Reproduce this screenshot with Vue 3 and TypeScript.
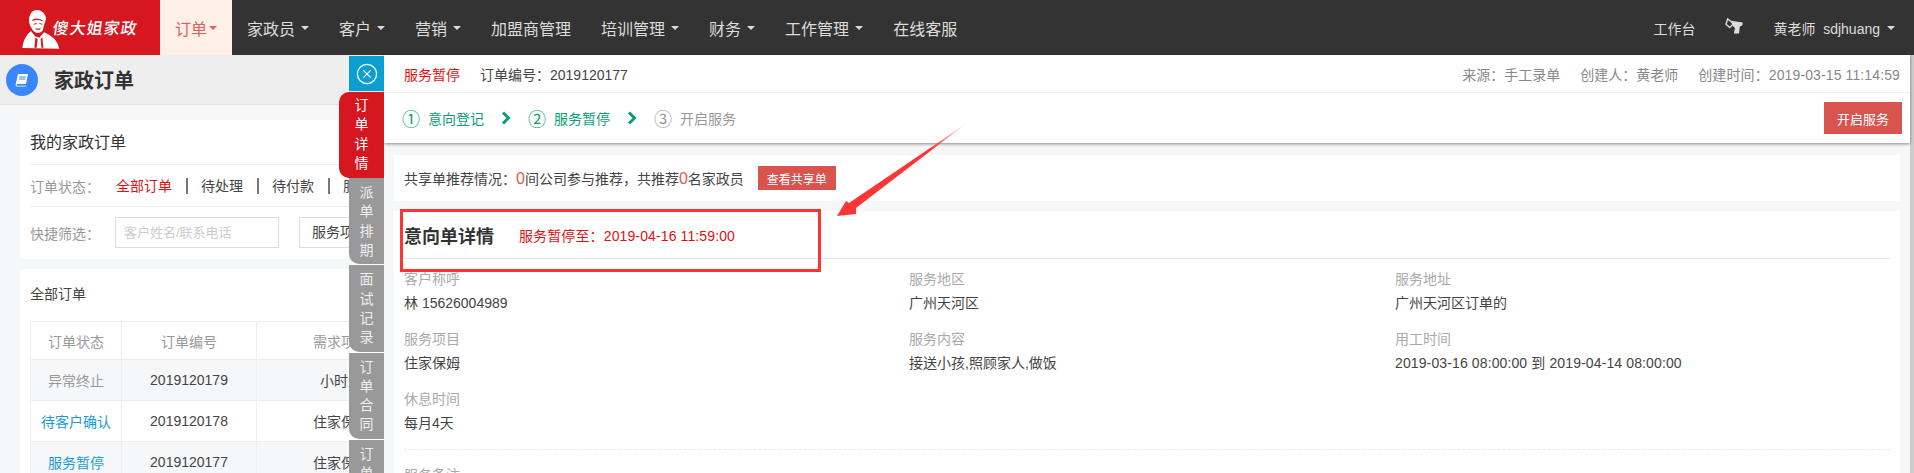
<script setup lang="ts">
interface NavItem {
  label: string;
  caret: boolean;
  active?: boolean;
}

interface OrderRow {
  status: string;
  code: string;
  need: string;
  muted?: boolean;
}

const navItems: NavItem[] = [
  { label: '订单', caret: true, active: true },
  { label: '家政员', caret: true },
  { label: '客户', caret: true },
  { label: '营销', caret: true },
  { label: '加盟商管理', caret: false },
  { label: '培训管理', caret: true },
  { label: '财务', caret: true },
  { label: '工作管理', caret: true },
  { label: '在线客服', caret: false },
];

const statusTabs = ['全部订单', '待处理', '待付款', '服务中'];

const orders: OrderRow[] = [
  { status: '异常终止', code: '2019120179', need: '小时工', muted: true },
  { status: '待客户确认', code: '2019120178', need: '住家保姆' },
  { status: '服务暂停', code: '2019120177', need: '住家保姆' },
];

const sideTabs = ['派单排期', '面试记录', '订单合同', '订单日志'];

const details = [
  { label: '客户称呼', value: '林 15626004989' },
  { label: '服务地区', value: '广州天河区' },
  { label: '服务地址', value: '广州天河区订单的' },
  { label: '服务项目', value: '住家保姆' },
  { label: '服务内容', value: '接送小孩,照顾家人,做饭' },
  { label: '用工时间', value: '2019-03-16 08:00:00 到 2019-04-14 08:00:00', date: true },
  { label: '休息时间', value: '每月4天' },
];
</script>

<template>
  <div class="page">
    <header class="nav">
      <div class="logo">
        <svg class="logo__figure" viewBox="66 14 114 120" width="38" height="40" aria-hidden="true">
          <path fill="#fff" d="M88 38Q94 14 115 17Q136 22 138 44L131 66Q130 84 116 86Q100 86 95 72Q84 56 88 38Z" />
          <path fill="#d7171f" d="M97 46Q112 38 128 48L127 51Q112 44 98 50ZM101 58L110 56V59L101 61ZM118 56L127 58V61L118 59ZM106 71Q114 75 122 70L121 75Q113 78 107 75Z" />
          <path fill="#fff" d="M93 80Q70 98 67 131L178 133Q172 100 132 84L118 100L105 96Z" />
          <path fill="#d7171f" d="M106 100L113 104L110 130H103ZM122 104L127 99L130 130H124Z" />
        </svg>
        <span class="logo__text">傻大姐家政</span>
      </div>
      <a
        v-for="item in navItems"
        :key="item.label"
        class="nav__item"
        :class="{ 'nav__item--active': item.active }"
      >
        {{ item.label }}<i v-if="item.caret" class="caret" />
      </a>
      <div class="nav__right">
        <a class="nav__link">工作台</a>
        <a class="nav__link">
          <svg viewBox="0 0 18 16" width="18" height="16" aria-hidden="true">
            <path fill="none" stroke="#ddd" stroke-width="1.4" d="M2.6 1L1 6.2L4.8 9.6L8.6 5.4Z" />
            <path fill="#ddd" d="M6 2.8L17.8 4.4L17.2 7.6L14.8 8.6L14 15.6H8.8L10 10.2L7.4 7.6Z" />
          </svg>
        </a>
        <a class="nav__link">黄老师&nbsp;&nbsp;sdjhuang<i class="caret caret--user" /></a>
      </div>
    </header>

    <div class="list-page">
      <div class="list-page__head">
        <span class="round-icon">
          <svg viewBox="0 0 16 16" width="16" height="16" aria-hidden="true">
            <path fill="#fff" d="M4 2H14L12 12H3.4Q2.6 12 2.5 13Q2.5 13.8 3.4 13.8H12.4L12.2 14.6H3Q1.4 14.6 1.6 12.6ZM5.4 4.4L5.2 5.4H11.6L11.8 4.4ZM5 6.6L4.8 7.6H11.2L11.4 6.6Z" />
          </svg>
        </span>
        <h1 class="list-page__title">家政订单</h1>
      </div>
      <div class="list-page__body">
        <section class="card filter-card">
          <h2 class="filter-card__title">我的家政订单</h2>
          <div class="filter-row filter-row--status">
            <span class="filter-row__label">订单状态：</span>
            <span
              v-for="(tab, i) in statusTabs"
              :key="tab"
              class="status-tab"
              :class="{ 'status-tab--on': i === 0 }"
            >{{ tab }}</span>
          </div>
          <div class="filter-row filter-row--quick">
            <span class="filter-row__label">快捷筛选：</span>
            <span class="fake-input">客户姓名/联系电话</span>
            <span class="fake-select">服务项目</span>
          </div>
        </section>
        <section class="card table-card">
          <h3 class="table-card__title">全部订单</h3>
          <table class="orders">
            <thead>
              <tr>
                <th class="orders__status">订单状态</th>
                <th class="orders__code">订单编号</th>
                <th class="orders__need">需求项目</th>
              </tr>
            </thead>
            <tbody>
              <tr v-for="row in orders" :key="row.code">
                <td :class="row.muted ? 'is-muted' : 'is-link'">{{ row.status }}</td>
                <td>{{ row.code }}</td>
                <td>{{ row.need }}</td>
              </tr>
            </tbody>
          </table>
        </section>
      </div>
    </div>

    <div class="tabs">
      <div class="tabs__close">
        <svg viewBox="0 0 22 22" width="22" height="22" aria-hidden="true">
          <circle cx="11" cy="11" r="9.6" fill="none" stroke="#fff" stroke-width="1.3" />
          <path fill="none" stroke="#fff" stroke-width="1.3" d="M7.4 7.4L14.6 14.6M14.6 7.4L7.4 14.6" />
        </svg>
      </div>
      <div class="tabs__item tabs__item--on">订单详情</div>
      <div v-for="tab in sideTabs" :key="tab" class="tabs__item">{{ tab }}</div>
    </div>

    <aside class="drawer">
      <div class="drawer__top">
        <div class="drawer__meta">
          <span class="drawer__state">服务暂停</span>
          <span>订单编号：2019120177</span>
          <div class="drawer__info">
            <span>来源：手工录单</span>
            <span>创建人：黄老师</span>
            <span class="is-date">创建时间：2019-03-15 11:14:59</span>
          </div>
        </div>
        <div class="steps">
          <span class="step step--done"><b>①</b>意向登记</span>
          <svg class="steps__arrow" viewBox="0 0 10 14" width="10" height="14" aria-hidden="true">
            <path fill="none" stroke="#0a9d74" stroke-width="3" d="M2 1.5L7.5 7L2 12.5" />
          </svg>
          <span class="step step--done"><b>②</b>服务暂停</span>
          <svg class="steps__arrow" viewBox="0 0 10 14" width="10" height="14" aria-hidden="true">
            <path fill="none" stroke="#0a9d74" stroke-width="3" d="M2 1.5L7.5 7L2 12.5" />
          </svg>
          <span class="step"><b>③</b>开启服务</span>
          <button class="steps__btn" type="button">开启服务</button>
        </div>
      </div>

      <div class="drawer__body">
        <div class="share">
          <span>共享单推荐情况：<em>0</em>间公司参与推荐，共推荐<em>0</em>名家政员</span>
          <button class="share__btn" type="button">查看共享单</button>
        </div>
        <div class="detail">
          <div class="detail__head">
            <h2 class="detail__title">意向单详情</h2>
            <span class="detail__until is-date">服务暂停至：2019-04-16 11:59:00</span>
          </div>
          <div class="detail__grid">
            <div v-for="item in details" :key="item.label" class="field">
              <div class="field__label">{{ item.label }}</div>
              <div class="field__value" :class="{ 'is-date': item.date }">{{ item.value }}</div>
            </div>
          </div>
          <div class="detail__note">
            <div class="field__label">服务备注</div>
          </div>
        </div>
      </div>
    </aside>

    <!-- annotation drawn over the screenshot -->
    <div class="mark" />
    <svg class="mark-arrow" viewBox="820 115 160 110" width="160" height="110" aria-hidden="true">
      <defs>
        <linearGradient id="arrow-fade" x1="967" y1="123" x2="930" y2="150" gradientUnits="userSpaceOnUse">
          <stop offset="0" stop-color="#ff3b3b" stop-opacity="0.1" />
          <stop offset="1" stop-color="#ff3535" />
        </linearGradient>
      </defs>
      <path fill="url(#arrow-fade)" d="M967 123L856 208L856 214L837 216L846 201L849 203Z" />
    </svg>
  </div>
</template>

<style scoped>
.page {
  position: relative;
  width: 1914px;
  height: 473px;
  overflow: hidden;
  background: #f6f7f9;
  color: #444;
  font-family: "Liberation Sans", "Noto Sans CJK SC", sans-serif;
  font-size: 14px;
}

.is-date {
  letter-spacing: 0.12px;
}

.nav {
  display: flex;
  height: 55px;
  background: #333;
  color: #ddd;
}

.logo {
  display: flex;
  align-items: center;
  flex: none;
  width: 160px;
  padding-left: 22px;
  box-sizing: border-box;
  background: #d7171f;
}

.logo__figure {
  flex: none;
  margin-top: 2px;
}

.logo__text {
  margin: -2px 0 0 -7px;
  color: #fff;
  font-size: 16px;
  font-weight: 500;
  letter-spacing: 1px;
  white-space: nowrap;
  transform: skewX(-8deg);
}

.nav__item {
  display: flex;
  align-items: center;
  padding: 0 15px;
  font-size: 16px;
  white-space: nowrap;
}

.nav__item--active {
  background: #fef0e6;
  color: #e0605a;
}

.caret {
  width: 0;
  height: 0;
  margin-left: 6px;
  border-top: 4px solid currentColor;
  border-right: 4px solid transparent;
  border-left: 4px solid transparent;
}

.nav__item--active .caret {
  margin-left: 2px;
}

.nav__right {
  display: flex;
  align-items: center;
  margin-left: auto;
  padding-right: 4px;
}

.nav__link {
  display: flex;
  align-items: center;
  padding: 0 15px;
  white-space: nowrap;
}

.nav__link svg {
  margin-top: -4px;
}

.caret--user {
  margin-left: 7px;
}

.list-page__head {
  display: flex;
  align-items: center;
  height: 50px;
  padding-left: 6px;
  box-sizing: border-box;
  border-bottom: 1px solid #e4e4e4;
  background: #eee;
}

.round-icon {
  display: flex;
  align-items: center;
  justify-content: center;
  width: 32px;
  height: 32px;
  border-radius: 50%;
  background: #3a86ff;
}

.list-page__title {
  margin: 0 0 0 16px;
  color: #333;
  font-size: 20px;
  font-weight: 700;
}

.list-page__body {
  padding: 15px 14px 0 20px;
}

.card {
  background: #fff;
}

.filter-card {
  height: 139px;
  padding: 0 10px;
  box-sizing: border-box;
}

.filter-card__title {
  height: 44px;
  margin: 0;
  border-bottom: 1px solid #eee;
  color: #333;
  font-size: 16px;
  font-weight: 400;
  line-height: 46px;
}

.filter-row {
  display: flex;
  align-items: center;
  height: 41px;
  border-bottom: 1px solid #eee;
}

.filter-row--quick {
  height: 31px;
  margin-top: 10px;
  border-bottom: 0;
}

.filter-row__label {
  flex: none;
  width: 86px;
  color: #999;
}

.status-tab {
  padding-right: 14px;
  margin-right: 13px;
  border-right: 2px solid #777;
  line-height: 16px;
}

.status-tab--on {
  color: #e01010;
}

.fake-input,
.fake-select {
  flex: none;
  height: 31px;
  box-sizing: border-box;
  border: 1px solid #ddd;
  line-height: 29px;
  white-space: nowrap;
}

.fake-input {
  width: 164px;
  margin-left: -1px;
  padding-left: 8px;
  color: #ccc;
  font-size: 13px;
}

.fake-select {
  width: 140px;
  margin-left: 20px;
  padding-left: 12px;
}

.table-card {
  height: 220px;
  margin-top: 10px;
  padding: 0 10px;
}

.table-card__title {
  height: 52px;
  margin: 0;
  font-size: 14px;
  font-weight: 400;
  line-height: 50px;
}

.orders {
  width: 392px;
  border-collapse: collapse;
  table-layout: fixed;
  text-align: center;
}

.orders th,
.orders td {
  border: 1px solid #eee;
  padding: 0;
  white-space: nowrap;
}

.orders th {
  height: 37px;
  color: #999;
  font-weight: 400;
}

.orders td {
  height: 40px;
}

.orders tbody tr:nth-child(odd) {
  background: #f6f7f9;
}

.orders__status {
  width: 90px;
}

.orders__code {
  width: 134px;
}

.orders__need {
  width: 168px;
}

.is-muted {
  color: #999;
}

.is-link {
  color: #1a9ad6;
}

.tabs {
  position: absolute;
  top: 56px;
  left: 339px;
  display: flex;
  flex-direction: column;
  align-items: flex-end;
  width: 45px;
  z-index: 2;
}

.tabs__close {
  display: flex;
  align-items: center;
  justify-content: center;
  width: 35px;
  height: 35px;
  margin-bottom: 1px;
  background: #0a9fd0;
}

.tabs__item {
  width: 35px;
  margin-bottom: 1px;
  padding: 5px 10px 4px;
  box-sizing: border-box;
  border-radius: 0 0 0 10px;
  background: #999;
  color: #eee;
  font-size: 14px;
  line-height: 19.3px;
  text-align: center;
  word-break: break-all;
}

.tabs__item--on {
  width: 45px;
  margin-bottom: 0;
  padding: 4px 15px 5px;
  border-radius: 10px 0 0 10px;
  background: #d7171f;
  color: #fff;
}

.drawer {
  position: absolute;
  top: 55px;
  right: 0;
  bottom: 0;
  left: 384px;
  box-sizing: border-box;
  border-right: 4px solid #ccc;
  background: #f6f7f9;
}

.drawer__top {
  position: relative;
  background: #fff;
  box-shadow: 0 1px 3px rgba(0, 0, 0, 0.45);
}

.drawer__meta {
  display: flex;
  align-items: center;
  height: 38px;
  padding: 0 10px 0 20px;
  box-sizing: border-box;
  border-bottom: 1px solid #eee;
}

.drawer__state {
  margin-right: 20px;
  color: #e01010;
}

.drawer__info {
  display: flex;
  gap: 20px;
  margin-left: auto;
  color: #888;
}

.steps {
  display: flex;
  align-items: center;
  height: 50px;
  padding: 0 8px 0 18px;
}

.step {
  display: flex;
  align-items: center;
  color: #999;
  white-space: nowrap;
}

.step b {
  width: 26px;
  font-size: 18px;
  font-weight: 400;
}

.step--done {
  color: #0a9d74;
}

.steps__arrow {
  flex: none;
  margin: 0 17px 0 17px;
}

.steps__btn {
  width: 78px;
  height: 32px;
  margin-left: auto;
  border: 0;
  padding: 0;
  background: #d9534f;
  color: #fff;
  font: inherit;
  font-size: 13px;
}

.drawer__body {
  padding: 12px 10px 0;
}

.share {
  display: flex;
  align-items: center;
  height: 46px;
  padding-left: 10px;
  background: #fff;
  white-space: nowrap;
}

.share em {
  color: #e05a50;
  font-size: 16px;
  font-style: normal;
}

.share__btn {
  width: 78px;
  height: 24px;
  margin-left: 14px;
  border: 0;
  padding: 0;
  background: #d9534f;
  color: #fff;
  font: inherit;
  font-size: 12px;
}

.detail {
  height: 300px;
  margin-top: 10px;
  padding: 0 10px;
  background: #fff;
}

.detail__head {
  display: flex;
  align-items: center;
  height: 48px;
  box-sizing: border-box;
  border-bottom: 1px solid #e8e8e8;
}

.detail__title {
  margin: 0 25px 0 0;
  color: #333;
  font-size: 18px;
  font-weight: 700;
}

.detail__until {
  color: #e01010;
}

.detail__grid {
  display: grid;
  grid-template-columns: 505px 486px 1fr;
  row-gap: 12px;
  margin-top: 8px;
}

.field__label {
  color: #aaa;
  line-height: 24px;
}

.field__value {
  line-height: 24px;
}

.detail__note {
  margin-top: 14px;
  padding-top: 13px;
  border-top: 1px dashed #e8e8e8;
}

.mark {
  position: absolute;
  top: 209px;
  left: 400px;
  width: 421px;
  height: 63px;
  box-sizing: border-box;
  border: 3px solid #f33;
  z-index: 3;
}

.mark-arrow {
  position: absolute;
  top: 115px;
  left: 820px;
  z-index: 3;
}
</style>
